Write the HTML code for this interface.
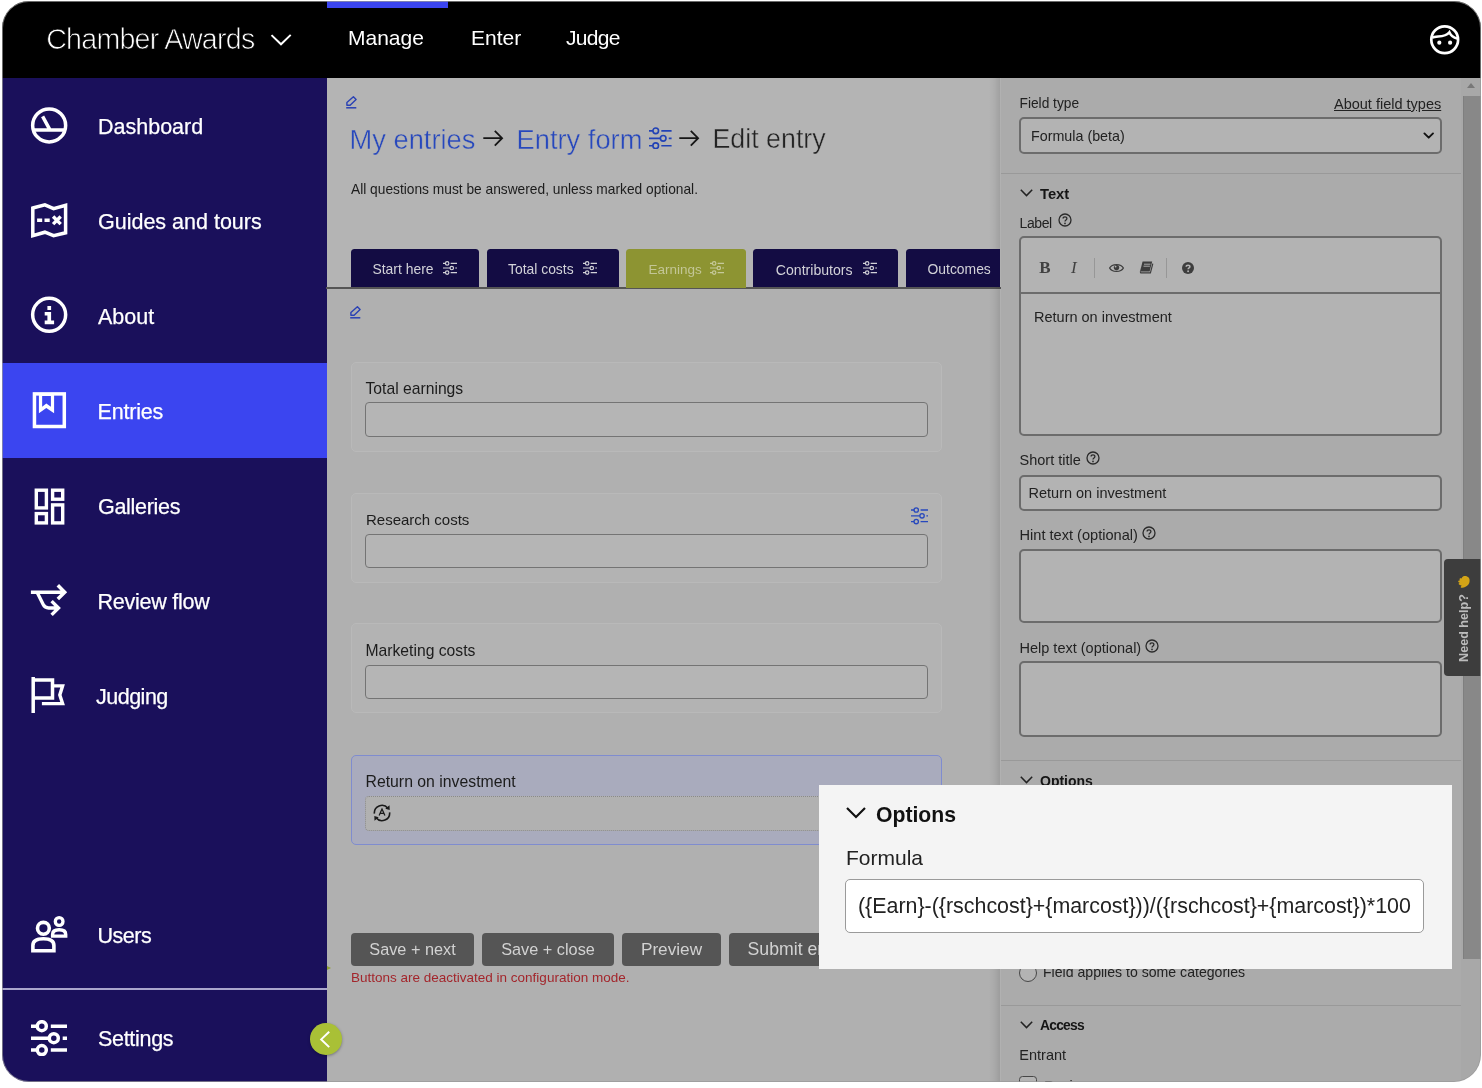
<!DOCTYPE html>
<html lang="en">
<head>
<meta charset="utf-8">
<title>Chamber Awards - Edit entry</title>
<style>
*{box-sizing:border-box;margin:0;padding:0}
html,body{width:1482px;height:1088px;background:#fff;overflow:hidden}
body{font-family:"Liberation Sans",sans-serif;color:#1f1f1f;position:relative}
#win{will-change:transform;position:absolute;left:0;top:0;width:1482px;height:1088px;clip-path:inset(1px 1px 6px 2px round 27px);background:#b1b1b1}
.a{position:absolute}
.t{position:absolute;white-space:nowrap;line-height:1}
.topbar{left:0;top:0;width:1482px;height:78px;background:#000}
.sidebar{left:0;top:78px;width:327px;height:1010px;background:#1a105b}
.active{left:0;top:363px;width:327px;height:95px;background:#3b45f0}
.nav{color:#fff;font-size:21.5px;left:98px;-webkit-text-stroke:.25px #fff}
.top{color:#fff;font-size:21px;top:27px}
.main-head{left:326px;top:78px;width:675px;height:210px;background:#b4b4b4}
.main-body{left:326px;top:288px;width:675px;height:800px;background:#b0b0b0}
.tab{z-index:1;position:absolute;top:249.4px;height:37.8px;background:#130c43;border-radius:3.5px 3.5px 0 0;color:#e4e4ea;font-size:13.5px}
.tt{z-index:2;top:262.5px;font-size:13.9px;color:#d2d2d8}
.ti{z-index:2;top:260.7px;color:#d2d2d8}
.tab.on{background:#8d9432;height:39px}
.card{position:absolute;left:351px;width:591px;height:90px;border:1px solid #b9b9b9;border-radius:5px;background:#b3b3b3}
.card.sel{background:#a9abbd;border-color:#7f8ccf}
.inp{position:absolute;left:365px;width:563px;height:35px;border:1px solid #747474;border-radius:4px;background:#b5b5b5}
.lbl{font-size:15.7px;left:365.5px;color:#1c1c1c}
.btn{position:absolute;top:933px;height:33px;background:#555;border-radius:4px;color:#d2d2d2;font-size:16.3px;text-align:center;line-height:33px;white-space:nowrap}
.panel{left:1000px;top:78px;width:482px;height:1010px;background:#ababab;border-left:1px solid #b1b1b1}
.pl{font-size:14.5px;left:1020px;color:#222}
.pbox{position:absolute;left:1019px;width:423px;border:2px solid #6c6c6c;border-radius:5px;background:#b3b3b3}
.hr{position:absolute;left:1001px;width:460px;height:1.3px;background:#999}
.sec{font-weight:700;font-size:15px;left:1040px;color:#151515}
</style>
</head>
<body>
<div id="win">
  <!-- main area backgrounds -->
  <div class="a main-head"></div>
  <div class="a main-body"></div>
  <div class="a panel"></div>

  <!-- top bar -->
  <div class="a topbar"></div>
  <div class="a" style="left:327px;top:0;width:121px;height:8px;background:#3b45f0"></div>
  <div class="t" style="left:46.2px;top:25.4px;font-size:28.6px;letter-spacing:-.75px;color:#fff;-webkit-text-stroke:.75px #000">Chamber Awards</div>
  <div class="t top" style="left:348px">Manage</div>
  <div class="t top" style="left:471px">Enter</div>
  <div class="t top" style="left:566px;letter-spacing:-.7px">Judge</div>

  <!-- sidebar -->
  <div class="a sidebar"></div>
  <div class="a active"></div>
  <div class="t nav" style="top:117px">Dashboard</div>
  <div class="t nav" style="top:212px">Guides and tours</div>
  <div class="t nav" style="top:307px">About</div>
  <div class="t nav" style="top:402px;left:97.5px;letter-spacing:-.2px">Entries</div>
  <div class="t nav" style="top:497px;letter-spacing:-.3px">Galleries</div>
  <div class="t nav" style="top:592px;left:97.5px;letter-spacing:-.25px">Review flow</div>
  <div class="t nav" style="top:687px;left:96px;letter-spacing:-.5px">Judging</div>
  <div class="t nav" style="top:926px;left:97.5px;letter-spacing:-.5px">Users</div>
  <div class="t nav" style="top:1029.3px;letter-spacing:-.3px">Settings</div>
  <div class="a" style="left:0;top:987.5px;width:327px;height:2.4px;background:#aaa6cc"></div>


  <!-- svg symbol defs -->
  <svg width="0" height="0" style="position:absolute">
    <defs>
      <symbol id="sl" viewBox="0 0 36.3 36.3" overflow="visible">
        <g fill="none" stroke="currentColor">
          <path d="M0 6.2H6.3M19.8 6.2H36.3M0 18.2H18.3M31.7 18.2H36.3M0 30.1H6.3M19.8 30.1H36.3"/>
          <circle cx="10.8" cy="6.2" r="4.5"/><circle cx="22.8" cy="18.2" r="4.5"/><circle cx="10.8" cy="30.1" r="4.5"/>
        </g>
      </symbol>
      <symbol id="hq" viewBox="0 0 14 14" overflow="visible">
        <circle cx="7" cy="7" r="6" fill="none" stroke="currentColor" stroke-width="1.3"/>
        <path d="M5.1 5.6 C5.1 3.3 8.9 3.3 8.9 5.6 C8.9 7 7 7 7 8.6" fill="none" stroke="currentColor" stroke-width="1.3"/>
        <circle cx="7" cy="10.4" r="0.85" fill="currentColor"/>
      </symbol>
      <symbol id="chev" viewBox="0 0 13 8" overflow="visible">
        <path d="M0.8 0.8 L6.5 6.6 L12.2 0.8" fill="none" stroke="currentColor" stroke-width="1.5"/>
      </symbol>
    </defs>
  </svg>

  <!-- sidebar icons (page coordinates) -->
  <svg class="a" style="left:0;top:0;pointer-events:none" width="340" height="1088" viewBox="0 0 340 1088" fill="none" stroke="#fff" stroke-width="3.5">
    <!-- dashboard -->
    <circle cx="49.15" cy="125.4" r="16.5"/>
    <path d="M32.8 130H65.5M42.6 116.4L49.8 129.6"/>
    <!-- map -->
    <path d="M32.8 208 L44.9 204.9 L53.6 208.6 L65.6 205.2 V232.8 L53.6 235.6 L44.9 232.2 L32.8 235.7 Z" stroke-linejoin="miter"/>
    <path d="M37.1 220.2H42.2M44.5 220.2H49.7M53.1 216.5L60.7 224.1M60.7 216.5L53.1 224.1" stroke-width="3.4"/>
    <!-- info -->
    <circle cx="49.15" cy="314.8" r="16.5"/>
    <path d="M47.4 305.9H51.1V310H47.4Z M44.7 312.1H51.1V320.6H54.1V324.2H44.7V320.6H47.4V315.4H44.7Z" fill="#fff" stroke="none"/>
    <!-- entries -->
    <rect x="34.45" y="393.9" width="29.85" height="32.6"/>
    <path d="M38.9 394V413.3L46.3 408L54.1 413.3V394Z M42.15 396V406.8L46.3 403.6L50.9 406.8V396Z" fill="#fff" stroke="none" fill-rule="evenodd"/>
    <!-- galleries -->
    <g stroke-width="3.4">
      <rect x="36.3" y="490.2" width="10.1" height="17.7"/>
      <rect x="52.6" y="490.2" width="10.1" height="9"/>
      <rect x="36.3" y="513.6" width="10.1" height="9.3"/>
      <rect x="52.6" y="504.9" width="10.1" height="18"/>
    </g>
    <!-- review flow -->
    <path d="M30.9 592.2H64.5M57.8 585.3L64.7 592.2L57.8 599.1" />
    <path d="M37.1 592.2L43.2 604.6Q44.9 608 48.6 608H58.3M51.6 601.1L58.5 608L51.6 614.9" stroke-width="3.4"/>
    <!-- judging -->
    <path d="M33.2 676.9V713M33.2 680H52.5V697.9H33.2"/>
    <path d="M54 685.85H62.6L59.8 695L62.6 703.65H41.9" stroke-width="3.4"/>
    <!-- users -->
    <circle cx="43.4" cy="928.3" r="5.9" stroke-width="3.6"/>
    <path d="M32.9 950.7V945.5Q32.9 938.7 43.4 938.7Q53.9 938.7 53.9 945.5V950.7Z" stroke-width="3.6"/>
    <circle cx="59.15" cy="921.5" r="3.85" stroke-width="3.3"/>
    <path d="M52.6 936.1V934.4Q52.6 929.7 59.15 929.7Q65.7 929.7 65.7 934.4V936.1Z" stroke-width="3.4"/>
  </svg>
  <!-- settings icon -->
  <svg class="a" style="left:31.1px;top:1020.1px;color:#fff" width="36.3" height="36.3" stroke-width="3.5"><use href="#sl"/></svg>

  <!-- topbar icons -->
  <svg class="a" style="left:262px;top:20px" width="40" height="40" viewBox="262 20 40 40" fill="none" stroke="#fff" stroke-width="2"><path d="M271.5 35.1L281 44.3L290.7 34.9"/></svg>
  <svg class="a" style="left:1424px;top:19px" width="40" height="40" viewBox="1424 19 40 40" fill="none" stroke="#fff" stroke-width="2.7">
    <circle cx="1444.7" cy="39.7" r="13.4"/>
    <path d="M1432.2 37.7C1436 35.3 1444.5 38.3 1449.4 32.2C1450.8 35.6 1454 37.8 1457.2 38.4" stroke-width="2.5"/>
    <circle cx="1439.3" cy="42.7" r="2.1" fill="#fff" stroke="none"/><circle cx="1450.1" cy="42.7" r="2.1" fill="#fff" stroke="none"/>
  </svg>

  <!-- breadcrumb icons -->
  <svg class="a" style="left:340px;top:90px" width="30" height="30" viewBox="340 90 30 30" fill="none" stroke="#2a41b4" stroke-width="1.4" stroke-linejoin="round"><path d="M353.4 96.7L356.1 99.4L350.1 105.2H346.9V102.5Z"/><path d="M346.2 107.8H356.3" stroke-width="1.5"/></svg>
  <svg class="a" style="left:340px;top:300px" width="30" height="30" viewBox="336 90 30 30" fill="none" stroke="#2a41b4" stroke-width="1.4" stroke-linejoin="round"><path d="M353.4 96.7L356.1 99.4L350.1 105.2H346.9V102.5Z"/><path d="M346.2 107.8H356.3" stroke-width="1.5"/></svg>
  <svg class="a" style="left:476px;top:120px" width="40" height="40" viewBox="476 120 40 40" fill="none" stroke="#161616" stroke-width="1.8"><path d="M483.3 138.2H501.2M494.8 130.8L502.1 138.2L494.8 145.6"/></svg>
  <svg class="a" style="left:672px;top:120px" width="40" height="40" viewBox="476 120 40 40" fill="none" stroke="#161616" stroke-width="1.8"><path d="M483.3 138.2H501.2M494.8 130.8L502.1 138.2L494.8 145.6"/></svg>
  <svg class="a" style="left:649.2px;top:126.6px;color:#2142b6" width="22.6" height="22.6" stroke-width="2.6"><use href="#sl"/></svg>

  <!-- breadcrumb -->
  <div class="t" style="left:349.5px;top:125.6px;font-size:27.3px;color:#2748bd;-webkit-text-stroke:.45px #b4b4b4">My entries</div>
  <div class="t" style="left:516.5px;top:125.6px;font-size:27.3px;color:#2748bd;-webkit-text-stroke:.45px #b4b4b4">Entry form</div>
  <div class="t" style="left:712.5px;top:126px;font-size:26.8px;color:#222;-webkit-text-stroke:.45px #b4b4b4">Edit entry</div>
  <div class="t" style="left:351px;top:183.3px;font-size:13.75px;color:#1c1c1c">All questions must be answered, unless marked optional.</div>

  <!-- tabs -->
  <div class="a" style="left:326px;top:287px;width:675px;height:1.5px;background:#555"></div>
  <div class="tab" style="left:351px;width:127.5px"></div>
  <div class="tab" style="left:486.5px;width:132px"></div>
  <div class="tab on" style="left:626px;width:120px"></div>
  <div class="tab" style="left:753px;width:145px"></div>
  <div class="tab" style="left:905.5px;width:94.5px;border-radius:3.5px 0 0 0"></div>
  <div class="t tt" style="left:372.5px">Start here</div>
  <div class="t tt" style="left:508px">Total costs</div>
  <div class="t tt" style="left:648.5px;color:#c3c696;font-size:13.5px">Earnings</div>
  <div class="t tt" style="left:775.8px;font-size:14.1px">Contributors</div>
  <div class="t tt" style="left:927.5px">Outcomes</div>
  <svg class="a ti" style="left:443.2px" width="14" height="14" stroke-width="3.1"><use href="#sl"/></svg>
  <svg class="a ti" style="left:583px" width="14" height="14" stroke-width="3.1"><use href="#sl"/></svg>
  <svg class="a ti" style="left:709.5px;color:#c6c99a" width="14" height="14" stroke-width="3.1"><use href="#sl"/></svg>
  <svg class="a ti" style="left:862.5px" width="14" height="14" stroke-width="3.1"><use href="#sl"/></svg>

  <!-- cards -->
  <div class="card" style="top:362px"></div>
  <div class="inp" style="top:402px"></div>
  <div class="t lbl" style="top:380.6px">Total earnings</div>
  <div class="card" style="top:493px"></div>
  <div class="inp" style="top:534px;height:34px"></div>
  <div class="t lbl" style="top:512.2px;font-size:15px;left:366px">Research costs</div>
  <div class="card" style="top:623px"></div>
  <div class="inp" style="top:665px;height:34px"></div>
  <div class="t lbl" style="top:642.6px">Marketing costs</div>
  <div class="card sel" style="top:755px"></div>
  <div class="inp" style="top:796px;border:1px dotted #8a8a8a;background:#b1b1b1"></div>
  <div class="t lbl" style="top:773.6px;font-size:15.8px">Return on investment</div>

  <!-- buttons -->
  <div class="btn" style="left:351px;width:123px">Save + next</div>
  <div class="btn" style="left:482px;width:132px">Save + close</div>
  <div class="btn" style="left:622px;width:99px;font-size:17.2px">Preview</div>
  <div class="btn" style="left:729px;width:140px;text-align:left;padding-left:18.5px;font-size:17.7px">Submit entry</div>
  <div class="t" style="left:351px;top:971px;font-size:13.5px;color:#a3262c">Buttons are deactivated in configuration mode.</div>


  <!-- right panel -->
  <div class="a" style="left:989px;top:78px;width:11px;height:1010px;background:linear-gradient(to right,rgba(0,0,0,0),rgba(0,0,0,.04) 50%,rgba(0,0,0,.11))"></div>
  <div class="t pl" style="left:1019.5px;top:96.7px;font-size:13.75px">Field type</div>
  <div class="t pl" style="left:1334px;top:97px;text-decoration:underline">About field types</div>
  <div class="pbox" style="top:117.4px;height:37.1px"></div>
  <div class="t" style="left:1031px;top:129px;font-size:14.3px;color:#222">Formula (beta)</div>
  <svg class="a" style="left:1422px;top:131px" width="13" height="9" viewBox="0 0 13 9"><path d="M2.4 2.4 L6.7 6.7 L11 2.4" fill="none" stroke="#111" stroke-width="1.9" stroke-linecap="round" stroke-linejoin="round"/></svg>
  <div class="hr" style="top:173px"></div>
  <div class="t sec" style="top:186.5px;font-size:14.75px">Text</div>
  <div class="t pl" style="left:1019.5px;top:215.7px;font-size:14px;letter-spacing:-.4px">Label</div>
  <div class="pbox" style="top:236.4px;height:200px"></div>
  <div class="a" style="left:1020px;top:292px;width:421px;height:2px;background:#6c6c6c"></div>
  <div class="t" style="left:1034px;top:309.7px;font-size:14.5px;color:#222">Return on investment</div>
  <div class="t pl" style="left:1019.5px;top:452.7px">Short title</div>
  <div class="pbox" style="top:474.6px;height:36.4px"></div>
  <div class="t" style="left:1028.5px;top:485.5px;font-size:14.5px;color:#222">Return on investment</div>
  <div class="t pl" style="left:1019.5px;top:528.3px;font-size:14.6px">Hint text (optional)</div>
  <div class="pbox" style="top:549px;height:74.3px"></div>
  <div class="t pl" style="left:1019.5px;top:641.3px">Help text (optional)</div>
  <div class="pbox" style="top:661px;height:76px"></div>
  <div class="hr" style="top:760px"></div>
  <div class="t sec" style="top:774px;font-size:14px">Options</div>
  <div class="a" style="left:1018.7px;top:964px;width:18px;height:18px;border:1.3px solid #474747;border-radius:50%;background:#b3b3b3"></div>
  <div class="t" style="left:1043px;top:964.6px;font-size:14.1px;color:#222">Field applies to some categories</div>
  <div class="hr" style="top:1005px"></div>
  <div class="t sec" style="top:1019.2px;font-size:13.8px;letter-spacing:-.75px">Access</div>
  <div class="t pl" style="left:1019.3px;top:1048.3px">Entrant</div>
  <div class="a" style="left:1019px;top:1076px;width:18px;height:18px;border:1.4px solid #474747;border-radius:3.5px;background:#b3b3b3"></div>
  <div class="t" style="left:1044px;top:1078.5px;font-size:14.3px;color:#222">Reviewer</div>
  <!-- scrollbar -->
  <div class="a" style="left:1461px;top:78px;width:21px;height:1010px;background:#a8a8a8"></div>
  <div class="a" style="left:1463px;top:95.5px;width:19px;height:863px;background:#888;border-left:1px solid #7f7f7f"></div>
  <div class="a" style="left:1467.3px;top:83px;width:0;height:0;border-left:4.8px solid transparent;border-right:4.8px solid transparent;border-bottom:5.6px solid #787878"></div>
  <!-- need help tab -->
  <div class="a" style="left:1444px;top:559px;width:38px;height:117px;background:#3d3d3d;border-radius:4px 0 0 4px"></div>
  <div class="t" style="left:1464px;top:628px;font-size:12.6px;font-weight:700;color:#bcbcbc;transform:translate(-50%,-50%) rotate(-90deg)">Need help?</div>


  <!-- panel icons -->
  <svg class="a" style="left:1019.8px;top:189.4px;color:#222" width="13" height="8"><use href="#chev"/></svg>
  <svg class="a" style="left:1019.8px;top:776.4px;color:#222" width="13" height="8"><use href="#chev"/></svg>
  <svg class="a" style="left:1019.8px;top:1021.4px;color:#222" width="13" height="8"><use href="#chev"/></svg>
  <svg class="a" style="left:1057.5px;top:213.4px;color:#2a2a2a" width="14" height="14"><use href="#hq"/></svg>
  <svg class="a" style="left:1085.5px;top:450.6px;color:#2a2a2a" width="14" height="14"><use href="#hq"/></svg>
  <svg class="a" style="left:1142px;top:526px;color:#2a2a2a" width="14" height="14"><use href="#hq"/></svg>
  <svg class="a" style="left:1145px;top:638.5px;color:#2a2a2a" width="14" height="14"><use href="#hq"/></svg>
  <!-- editor toolbar -->
  <div class="t" style="left:1039.3px;top:259px;font-family:'Liberation Serif',serif;font-weight:700;font-size:17px;color:#414141">B</div>
  <div class="t" style="left:1071px;top:259px;font-family:'Liberation Serif',serif;font-style:italic;font-size:17px;color:#414141">I</div>
  <div class="a" style="left:1094px;top:258px;width:1px;height:20px;background:#979797"></div>
  <div class="a" style="left:1166px;top:258px;width:1px;height:20px;background:#979797"></div>
  <svg class="a" style="left:1109px;top:262px" width="15" height="12" viewBox="0 0 15 12"><path d="M0.6 6C3 1.4 12 1.4 14.4 6C12 10.6 3 10.6 0.6 6Z" fill="none" stroke="#3d3d3d" stroke-width="1.3"/><circle cx="7.5" cy="5.6" r="2.7" fill="#3d3d3d"/><circle cx="6.6" cy="4.6" r="0.9" fill="#b4b4b4"/></svg>
  <svg class="a" style="left:1138.5px;top:261px" width="15" height="14" viewBox="0 0 15 14"><path d="M3.6 0.6H13.2L10.6 10.4H1.0Z" fill="#3d3d3d"/><path d="M13.8 2.6L11.4 11.8H1.8L1.2 10.6" fill="none" stroke="#3d3d3d" stroke-width="1.2"/><path d="M5 3.2H11.4M4.5 5.2H10.9" stroke="#b4b4b4" stroke-width="0.9"/></svg>
  <svg class="a" style="left:1182px;top:261.7px" width="12" height="12" viewBox="0 0 12 12"><circle cx="6" cy="6" r="6" fill="#3d3d3d"/><path d="M4.2 4.7C4.2 2.6 7.9 2.6 7.9 4.7C7.9 5.9 6.1 5.9 6.1 7.2" fill="none" stroke="#b4b4b4" stroke-width="1.5"/><circle cx="6.1" cy="9.2" r="0.95" fill="#b4b4b4"/></svg>
  <!-- formula field icon -->
  <svg class="a" style="left:371.5px;top:802.85px" width="20" height="20" viewBox="0 0 20 20"><g fill="none" stroke="#1a1a1a" stroke-width="1.6"><path d="M2.4 10.7A7.6 7.6 0 0 1 15.9 5.2"/><path d="M17.6 9.3A7.6 7.6 0 0 1 4.1 14.8"/></g><path d="M13.3 5.8L17.5 2.3L17.7 7Z M6.7 14.2L2.5 17.7L2.3 13Z" fill="#1a1a1a"/><path d="M7.1 12.5L10 6L12.9 12.5M8.2 10.3H11.8" fill="none" stroke="#1a1a1a" stroke-width="1.25"/></svg>
  <!-- card sliders icon -->
  <svg class="a" style="left:910.5px;top:507.3px;color:#2748bd" width="17.6" height="17.6" stroke-width="2.7"><use href="#sl"/></svg>
  <!-- collapse button -->
  <div class="a" style="left:327px;top:966px;width:0;height:0;border-top:2px solid transparent;border-bottom:2px solid transparent;border-left:4px solid #8fa032"></div>
  <div class="a" style="left:310.3px;top:1023.4px;width:31.6px;height:31.6px;border-radius:50%;background:#a9c036;box-shadow:0 1px 3px rgba(0,0,30,.35)"></div>
  <svg class="a" style="left:310px;top:1023px" width="32" height="32" viewBox="310 1023 32 32" fill="none" stroke="#fff" stroke-width="2"><path d="M329.2 1031.7L321.2 1039.4L329.2 1047.1"/></svg>
  <!-- wave emoji -->
  <svg class="a" style="left:1456.5px;top:575.3px;transform:rotate(-80deg)" width="14" height="14" viewBox="0 0 14 14"><path d="M1 6.2C0.6 4.4 2 4 3 5.4L3.4 3C3.7 1.6 5.2 1.8 5.2 3.2L5.9 1.8C6.6 0.6 8 1.2 7.7 2.6L8.8 2.2C10 1.8 10.6 3 9.9 4L11.3 4.4C13.6 5.4 13.8 9 12.2 10.8C10.6 12.6 7.4 12.9 5.2 11.8C3 10.7 1.5 8.4 1 6.2Z" fill="#d3a417"/></svg>

  <!-- callout -->
  <div class="a" style="left:819px;top:785px;width:633px;height:184px;background:#f4f4f4"></div>
  <svg class="a" style="left:845px;top:806px" width="22" height="14" viewBox="0 0 22 14"><path d="M2 2 L11 11 L20 2" fill="none" stroke="#111" stroke-width="2.2" stroke-linecap="butt" stroke-linejoin="miter"/></svg>
  <div class="t" style="left:876px;top:803.7px;font-size:21.2px;font-weight:700;color:#111">Options</div>
  <div class="t" style="left:846px;top:847px;font-size:21px;color:#222">Formula</div>
  <div class="a" style="left:845px;top:879px;width:579px;height:54px;background:#fff;border:1px solid #9a9a9a;border-radius:5px"></div>
  <div class="t" style="left:858px;top:896px;font-size:21.4px;color:#222">({Earn}-({rschcost}+{marcost}))/({rschcost}+{marcost})*100</div>
  <div class="a" style="left:2px;top:1px;width:1479px;height:1081px;border-radius:27px;border:1px solid rgba(152,152,152,.7);pointer-events:none"></div>
</div>
</body>
</html>
